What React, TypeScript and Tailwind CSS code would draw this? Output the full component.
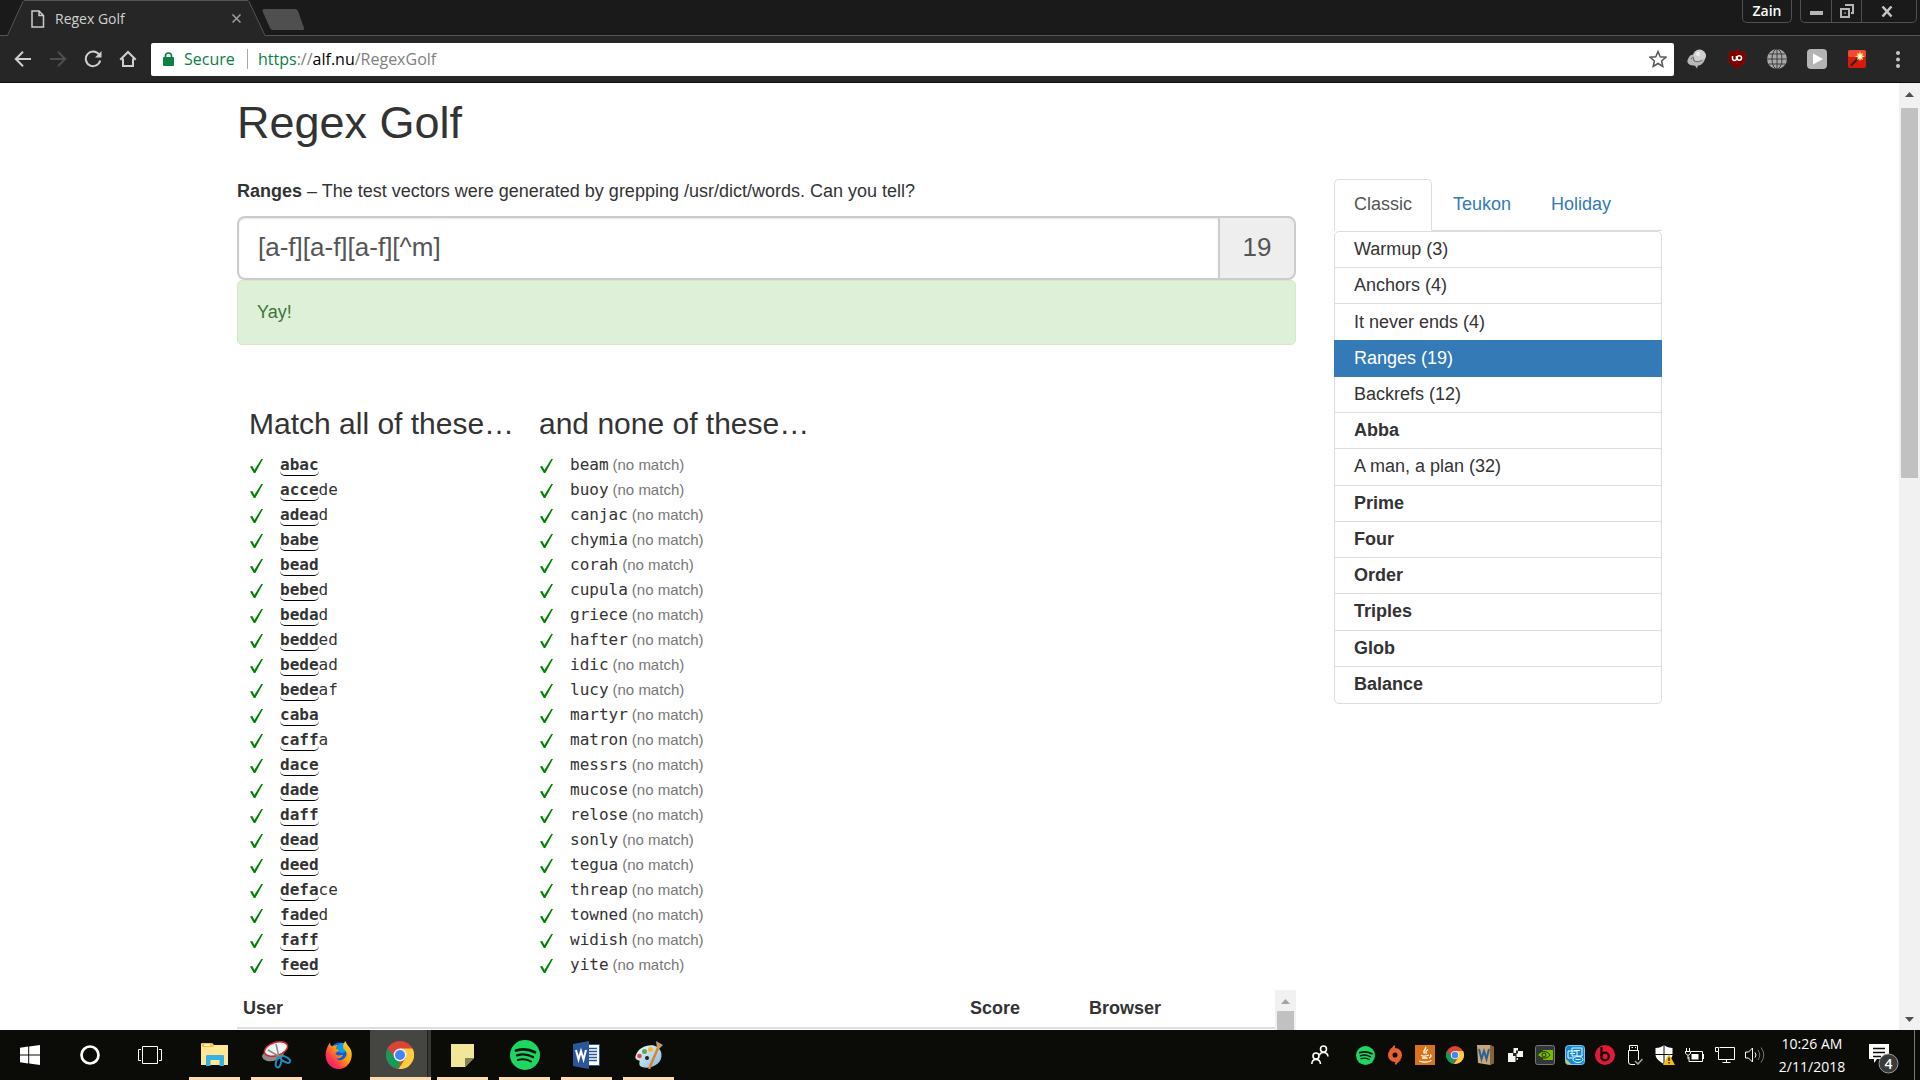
import React from "react";

const ui = "font-['Open_Sans','Noto_Sans',sans-serif]";

const matches: [string, string][] = [
  ["abac", ""], ["acce", "de"], ["adea", "d"], ["babe", ""], ["bead", ""], ["bebe", "d"], ["beda", "d"],
  ["bedd", "ed"], ["bede", "ad"], ["bede", "af"], ["caba", ""], ["caff", "a"], ["dace", ""], ["dade", ""],
  ["daff", ""], ["dead", ""], ["deed", ""], ["defa", "ce"], ["fade", "d"], ["faff", ""], ["feed", ""],
];

const nonMatches = [
  "beam", "buoy", "canjac", "chymia", "corah", "cupula", "griece", "hafter", "idic", "lucy", "martyr",
  "matron", "messrs", "mucose", "relose", "sonly", "tegua", "threap", "towned", "widish", "yite",
];

const levels = [
  { name: "Warmup (3)", solved: true }, { name: "Anchors (4)", solved: true },
  { name: "It never ends (4)", solved: true }, { name: "Ranges (19)", solved: true, active: true },
  { name: "Backrefs (12)", solved: true }, { name: "Abba" }, { name: "A man, a plan (32)", solved: true },
  { name: "Prime" }, { name: "Four" }, { name: "Order" }, { name: "Triples" }, { name: "Glob" }, { name: "Balance" },
];

function Spotify({ size }: { size: number }) {
  return (
    <svg width={size} height={size} viewBox="0 0 30 30" fill="none" stroke="#10130f" strokeLinecap="round">
      <circle cx="15" cy="15" r="15" fill="#1ed760" stroke="none" />
      <path d="M6 10.500c6-1.800 13.500-1.300 19 1.800" strokeWidth="2.800" />
      <path d="M7 15.300c5-1.500 11.300-.900 16 1.800" strokeWidth="2.300" />
      <path d="M7.800 20c4.300-1.200 9.200-.700 13.200 1.500" strokeWidth="1.900" />
    </svg>
  );
}

function ChromeLogo({ size }: { size: number }) {
  return (
    <svg width={size} height={size} viewBox="0 0 28 28">
      <circle cx="14" cy="14" r="14" fill="#db4437" />
      <path d="M1.900 7 8.400 17.300 14 20.500 12.500 27.900A14 14 0 0 1 1.900 7z" fill="#0f9d58" />
      <path d="M14 7.600H26.500A14 14 0 0 1 12.500 27.900L19.600 17.300z" fill="#ffcd40" />
      <circle cx="14" cy="14" r="6.400" fill="#f1f1f1" />
      <circle cx="14" cy="14" r="5" fill="#4285f4" />
    </svg>
  );
}

function TabStrip() {
  return (
    <div className={`flex h-9 items-start bg-[#1a1a1a] shadow-[inset_0_-1px_0_#555] ${ui}`}>
      <div className="relative ml-[7px] h-9 w-[259px]">
        <svg className="absolute inset-0" width="259" height="36" viewBox="0 0 259 36">
          <path d="M0 36 .5 35.500 16 1.500Q16.500.500 18 .500H240Q241.500.500 242 1.500L258 35.500 258 36z" fill="#262626" />
          <path d="M0 35.500H.5L16 1.500Q16.500.500 18 .500H240Q241.500.500 242 1.500L258 35.500H259" fill="none" stroke="#555" />
        </svg>
        <div className="relative flex h-[37px] items-center pl-6 pr-[21px]">
          <svg width="14" height="18" viewBox="0 0 14 18" fill="none" stroke="#ccc" strokeWidth="1.500">
            <path d="M1 1H8L12.500 5.500V17H1zM8 1V5.500H12.500" />
          </svg>
          <span className="ml-[10px] flex-1 text-[14px] text-[#d0d0d0]">Regex Golf</span>
          <button aria-label="Close tab" className="p-1">
            <svg width="9" height="9" viewBox="0 0 9 9" stroke="#a0a0a0" strokeWidth="1.500">
              <path d="M.5.500 8.500 8.500M8.500.500.500 8.500" />
            </svg>
          </button>
        </div>
      </div>
      <button aria-label="New tab" className="-ml-[5px] mt-[9px]">
        <svg width="44" height="21" viewBox="0 0 44 21">
          <path d="M3 0H34Q36 0 37 2L43 19Q43.500 21 41 21H12Q10 21 9 19L1.500 2Q1 0 3 0z" fill="#4f4f4f" />
        </svg>
      </button>
      <div className="flex-1" />
      <button className="h-[23px] w-[50px] rounded-b-[5px] border border-t-0 border-[#505050] text-[14px] leading-[22px] font-semibold text-white">
        Zain
      </button>
      <div className="mr-[3px] ml-2 flex h-[23px] rounded-b-[5px] border border-t-0 border-[#505050]">
        <button aria-label="Minimize" className="flex w-[31px] items-end justify-center border-r border-[#505050] pb-[7px]">
          <svg width="13" height="4"><rect width="13" height="4" y="0" fill="#b5b5b5" /></svg>
        </button>
        <button aria-label="Restore" className="flex w-[30px] items-center justify-center border-r border-[#505050]">
          <svg width="14" height="14" viewBox="0 0 14 14" fill="none" stroke="#b5b5b5" strokeWidth="2">
            <path d="M5 1H13V9H11M1 5H9V13H1zM4.500 9H5.500" />
          </svg>
        </button>
        <button aria-label="Close" className="flex w-[54px] items-center justify-center pr-1">
          <svg width="12" height="11" viewBox="0 0 12 11" stroke="#c4c4c4" strokeWidth="2.500">
            <path d="M1.500.500 10.500 10.500M10.500.500 1.500 10.500" />
          </svg>
        </button>
      </div>
    </div>
  );
}

function Toolbar() {
  return (
    <div className={`flex h-[47px] items-center border-b border-[#0c0c0c] bg-[#262626] pr-[14px] pl-[14px] ${ui}`}>
      <div className="flex w-[137px] shrink-0 gap-[17px]">
        <button aria-label="Back">
          <svg width="18" height="18" viewBox="0 0 18 18" fill="none" stroke="#cfcfcf" strokeWidth="2"><path d="M17 9H2.500M9 1.800 1.800 9 9 16.200" /></svg>
        </button>
        <button aria-label="Forward">
          <svg width="18" height="18" viewBox="0 0 18 18" fill="none" stroke="#4e4e4e" strokeWidth="2"><path d="M1 9H15.500M9 1.800 16.200 9 9 16.200" /></svg>
        </button>
        <button aria-label="Reload">
          <svg width="18" height="18" viewBox="0 0 18 18" fill="none" stroke="#cfcfcf" strokeWidth="2"><path d="M15 4.500A7.300 7.300 0 1 0 16.200 10.500" /><path d="M17.500 1V7.500H11z" fill="#cfcfcf" stroke="none" /></svg>
        </button>
        <button aria-label="Home">
          <svg width="18" height="18" viewBox="0 0 18 18" fill="none" stroke="#cfcfcf" strokeWidth="2"><path d="M1.200 9.800 9 2 16.800 9.800M4 8.500V16H14V8.500" /></svg>
        </button>
      </div>
      <div className="flex h-[33px] flex-1 items-center rounded-[2px] bg-white px-3 text-[16px]">
        <svg width="11" height="14" viewBox="0 0 11 14">
          <path d="M2.500 6V4a3 3 0 0 1 6 0V6" fill="none" stroke="#0b8043" strokeWidth="1.700" />
          <rect y="5" width="11" height="9" rx="1" fill="#0b8043" />
        </svg>
        <span className="ml-[10px] w-[63px] text-[#0b8043]">Secure</span>
        <span className="mr-[10px] h-5 w-px bg-[#aaa]" />
        <a href="#address" className="flex-1 text-[#808080]">
          <span className="text-[#0b8043]">https</span>://<span className="text-black">alf.nu</span>/RegexGolf
        </a>
        <button aria-label="Bookmark" className="-mr-[5px]">
          <svg width="18" height="18" viewBox="0 0 18 18" fill="none" stroke="#555" strokeWidth="1.500">
            <path d="M9 1.500 11.200 6.700 16.800 7.200 12.600 10.900 13.800 16.400 9 13.500 4.200 16.400 5.400 10.900 1.200 7.200 6.800 6.700z" />
          </svg>
        </button>
      </div>
      <div className="ml-[13px] flex gap-5">
        <button aria-label="Extension">
          <svg width="20" height="20" viewBox="0 0 20 20">
            <circle cx="12.500" cy="7" r="6.500" fill="#cfcfcf" />
            <path d="M1 10C4 3 8 6 7 9S9 14 18 9C17 15 13 16.500 11 16.500L10 19.500 8 16.800C2 16.500-1 14 1 10z" fill="#b8b8b8" />
            <path d="M4 10C6 7 7 8 6.500 10S9 14 15 11.500" fill="none" stroke="#6a6a6a" />
            <circle cx="11" cy="5" r="2" fill="#ededed" />
          </svg>
        </button>
        <button aria-label="Ad blocker">
          <svg width="20" height="20" viewBox="0 0 20 20" fill="none" stroke="#fff" strokeWidth="1.500">
            <path d="M10 .5C13 2.500 15.500 3 18.500 3V10C18.500 14.500 14 17.500 10 19.500 6 17.500 1.500 14.500 1.500 10V3C4.500 3 7 2.500 10 .500z" fill="#800000" stroke="#5a1a1a" strokeWidth="1" />
            <path d="M5.500 7V9.500a2 2 0 0 0 4 0V7" /><circle cx="12.300" cy="9" r="2.200" />
          </svg>
        </button>
        <button aria-label="Web extension">
          <svg width="20" height="20" viewBox="0 0 20 20" fill="none" stroke="#3e3e3e">
            <circle cx="10" cy="10" r="10" fill="#a8a8a8" stroke="none" />
            <path d="M10 0V20M0 10H20M2 5H18M2 15H18" /><ellipse cx="10" cy="10" rx="5" ry="10" />
          </svg>
        </button>
        <button aria-label="Player">
          <svg width="20" height="20" viewBox="0 0 20 20"><rect width="20" height="20" rx="4" fill="#b4b4b4" /><path d="M6 4.500V15.500L16 10z" fill="#fff" /></svg>
        </button>
        <button aria-label="Magic actions">
          <svg width="20" height="20" viewBox="0 0 20 20">
            <rect x="1" y="1" width="18" height="18" rx="2" fill="#d8190b" /><rect x="1" y="1" width="18" height="7" rx="2" fill="#ee4a34" />
            <path d="M4 16.500 12 8.500" stroke="#222" strokeWidth="2" />
            <path d="M13 2 13.800 5 16 4 15.200 6.500 18 7.500 15.200 8.500 16 11 13.800 10 13 12.500 12.200 10 10 11 10.800 8.500 8 7.500 10.800 6.500 10 4 12.200 5z" fill="#ffe27a" />
            <circle cx="13" cy="7.500" r="1.600" fill="#fff" />
          </svg>
        </button>
        <button aria-label="Menu" className="ml-[3px] flex w-4 justify-center">
          <svg width="4" height="20" viewBox="0 0 4 20" fill="#c8c8c8"><circle cx="2" cy="4" r="2" /><circle cx="2" cy="10.500" r="2" /><circle cx="2" cy="17" r="2" /></svg>
        </button>
      </div>
    </div>
  );
}

function Check() {
  return (
    <span className="w-[31px] shrink-0 self-center pl-px">
      <svg width="13" height="14" viewBox="0 0 13 14" role="img" aria-label="passed">
        <path d="M0 7.500 2.300 6.900 4.400 11 11.300 0H13L5.300 14H3.800z" fill="#008000" />
      </svg>
    </span>
  );
}

const mono = "font-['DejaVu_Sans_Mono',monospace] text-[16px]";
const row = "flex h-[25px] items-baseline pt-[2px] leading-[22px]";

function WordLists() {
  return (
    <div className="mt-[62px] flex pl-3">
      <section className="w-[290px]">
        <h3 className="text-[30px] leading-[33px] whitespace-nowrap">Match all of these…</h3>
        <ul className="mt-3">
          {matches.map(([hit, rest]) => (
            <li key={hit + rest} className={row}>
              <Check />
              <span className={mono}>
                <b className="inline-block h-[22px] rounded-b-[5px] border-b border-black">{hit}</b>{rest}
              </span>
            </li>
          ))}
        </ul>
      </section>
      <section>
        <h3 className="text-[30px] leading-[33px] whitespace-nowrap">and none of these…</h3>
        <ul className="mt-3">
          {nonMatches.map((word) => (
            <li key={word} className={row}>
              <Check />
              <span className={mono}>{word}</span>
              <span className="ml-1 text-[15px] text-[#777]">(no match)</span>
            </li>
          ))}
        </ul>
      </section>
    </div>
  );
}

function ScoreTable() {
  return (
    <div className="mt-[13px] flex h-[200px]">
      <div className="flex-1">
        <table className="w-full table-fixed text-left">
          <thead>
            <tr className="border-b-2 border-[#ddd]">
              <th className="p-[6px]">User</th>
              <th className="w-[119px] p-[6px]">Score</th>
              <th className="w-[192px] p-[6px]">Browser</th>
            </tr>
          </thead>
        </table>
      </div>
      <div aria-hidden className="flex w-[21px] flex-col items-center bg-[#f1f1f1]">
        <svg width="9" height="21" viewBox="0 0 9 21"><path d="M0 14 4.500 9 9 14z" fill="#a3a3a3" /></svg>
        <div className="w-[17px] flex-1 bg-[#c1c1c1]" />
      </div>
    </div>
  );
}

function Sidebar() {
  return (
    <aside>
      <nav className="flex border-b border-[#ddd]">
        <a href="#classic" className="-mb-px rounded-t-[5px] border border-b-white border-[#ddd] bg-white px-[19px] pt-3 pb-[13px] text-[#555]">Classic</a>
        <a href="#teukon" className="ml-px px-5 py-[13px] text-[#337ab7]">Teukon</a>
        <a href="#holiday" className="px-5 py-[13px] text-[#337ab7]">Holiday</a>
      </nav>
      <ul className="grid min-h-[473px] auto-rows-fr rounded-[5px] border border-[#ddd]">
        {levels.map((l) => (
          <li key={l.name} className="flex border-b border-[#ddd] last:border-b-0">
            <a
              href="#level"
              className={
                l.active
                  ? "-mx-px -my-px flex flex-1 items-center bg-[#337ab7] px-5 text-white"
                  : l.solved
                    ? "flex flex-1 items-center px-[19px]"
                    : "flex flex-1 items-center px-[19px] font-bold"
              }
            >
              {l.name}
            </a>
          </li>
        ))}
      </ul>
    </aside>
  );
}

function TaskButton({ label, children, open = true }: { label: string; children: React.ReactNode; open?: boolean }) {
  return (
    <button
      aria-label={label}
      className={
        open
          ? "flex w-[51px] items-center justify-center border-b-[3px] border-[#ffdcaf] pt-[3px]"
          : "flex w-[51px] items-center justify-center"
      }
    >
      {children}
    </button>
  );
}

function Tray({ label, children }: { label: string; children: React.ReactNode }) {
  return <button aria-label={label} className="flex w-[30px] items-center justify-center">{children}</button>;
}

function Taskbar() {
  return (
    <footer className={`flex h-[50px] shrink-0 bg-[#0b0b08] text-white ${ui}`}>
      <button aria-label="Start" className="flex w-[60px] items-center justify-center">
        <svg width="20" height="20" viewBox="0 0 20 20" fill="#fff"><path d="M0 2.800 8.200 1.600V9.500H0zM9.200 1.400 20 0V9.500H9.200zM0 10.500H8.200V18.400L0 17.200zM9.200 10.500H20V20L9.200 18.600z" /></svg>
      </button>
      <button aria-label="Cortana" className="flex w-[60px] items-center justify-center">
        <svg width="20" height="20" viewBox="0 0 20 20"><circle cx="10" cy="10" r="8.500" fill="none" stroke="#fff" strokeWidth="2.700" /></svg>
      </button>
      <button aria-label="Task view" className="flex w-[60px] items-center justify-center">
        <svg width="24" height="18" viewBox="0 0 24 18" fill="none" stroke="#fff"><path d="M4.500.500H19.500V17.500H4.500zM3 3.500H.500V14.500H3M21 3.500H23.500V14.500H21" /></svg>
      </button>
      <div className="ml-[9px] flex gap-[11px]">
        <TaskButton label="File Explorer">
          <svg width="28" height="24" viewBox="0 0 28 24">
            <path d="M0 1Q0 0 1 0H11L13 2H27V22H0z" fill="#ffe793" /><path d="M1 0H11L13 4H1z" fill="#f5c13d" /><path d="M3 1.500H9V3H3z" fill="#fff" />
            <path d="M5 23V13Q5 12 6 12H22Q23 12 23 13V23H18.500V17H9.500V23z" fill="#37b0e4" />
          </svg>
        </TaskButton>
        <TaskButton label="Snipping Tool">
          <svg width="30" height="28" viewBox="0 0 30 28" fill="none">
            <ellipse cx="11" cy="14" rx="11" ry="6" fill="#8b8b8b" transform="rotate(-12 11 14)" />
            <ellipse cx="14" cy="8" rx="12" ry="6.500" fill="#f4f4f4" stroke="#d2262c" strokeWidth="1.500" transform="rotate(-18 14 8)" />
            <path d="M6 9 18 16M14 3 17 16" stroke="#8a8a8a" strokeWidth="1.500" />
            <ellipse cx="16.500" cy="21.500" rx="2.500" ry="5" stroke="#2189bd" strokeWidth="2" transform="rotate(15 16.500 21.500)" />
            <ellipse cx="23.500" cy="18.500" rx="2.500" ry="5" stroke="#2189bd" strokeWidth="2" transform="rotate(-62 23.500 18.500)" />
          </svg>
        </TaskButton>
        <TaskButton label="Firefox" open={false}>
          <svg width="28" height="28" viewBox="0 0 28 28">
            <defs><linearGradient id="fx" x1="1" y1="0" x2="0" y2="1"><stop offset="0" stopColor="#ffe226" /><stop offset=".45" stopColor="#ff980e" /><stop offset=".7" stopColor="#ff3750" /><stop offset="1" stopColor="#e31587" /></linearGradient></defs>
            <circle cx="14.500" cy="11.500" r="10" fill="#0a5fd8" /><circle cx="17" cy="7" r="5" fill="#00a2f5" />
            <path d="M1 10C2 7 3 4 5 1.500 5 4 6 5 7.500 5.500 9 4.500 11 4 13 4 12 5 11 6 11.500 8L14 9C13 11 11 11.500 10.500 12 11 15 15 15 18 13.500 17 17 13 18 11 17.500 14 21 20 19 21.500 14 22 11 20 9 18.500 8 17.500 5 18.500 2 20.500 0 21 3 24 5 26 9 29 18 23 28 14 28 5 28-1 20 1 10z" fill="url(#fx)" />
          </svg>
        </TaskButton>
        <button aria-label="Chrome" className="-mx-[5px] flex w-[61px] border-b-[3px] border-[#ffdcaf] bg-[#454542]">
          <span className="flex w-[57px] items-center justify-center self-stretch pt-[3px] pl-[2px]"><ChromeLogo size={28} /></span>
          <span className="flex-1 self-stretch border-l border-[#222] bg-[#373735]" />
        </button>
        <TaskButton label="Sticky Notes">
          <svg width="23" height="23" viewBox="0 0 23 23"><path d="M0 0H23V14L14 23H0z" fill="#f2e699" /><path d="M14 14H23L14 23z" fill="#85805a" /></svg>
        </TaskButton>
        <TaskButton label="Spotify"><Spotify size={30} /></TaskButton>
        <TaskButton label="Word">
          <svg width="28" height="28" viewBox="0 0 28 28">
            <rect x="14" y="3.500" width="12.500" height="21" fill="#fff" stroke="#2b579a" />
            <path d="M16 7.500H24M16 10.500H24M16 13.500H24M16 16.500H24M16 19.500H24" stroke="#2b579a" strokeWidth="1.500" />
            <path d="M0 3 16 0V28L0 25z" fill="#2b579a" />
            <path d="M3 9 5.500 18.500 8 10 10.500 18.500 13 9" fill="none" stroke="#fff" strokeWidth="2" />
          </svg>
        </TaskButton>
        <TaskButton label="Paint">
          <svg width="30" height="28" viewBox="0 0 30 28">
            <defs><linearGradient id="pal" x1="0" y1="0" x2="1" y2="1"><stop offset="0" stopColor="#f4fbff" /><stop offset="1" stopColor="#82b8da" /></linearGradient></defs>
            <path d="M2 14C4 7 13 3 20 4.500 28 7 29 15 26 20 22 26 13 28 8 26 3 24 7 20 5 19.500 2 19 .500 17 2 14z" fill="url(#pal)" />
            <circle cx="5.500" cy="15" r="2.300" fill="#e04545" /><circle cx="10.500" cy="10.500" r="2.500" fill="#54ae49" /><circle cx="16.500" cy="8.500" r="2.500" fill="#f9b531" /><circle cx="13" cy="17" r="2" fill="#16222c" />
            <path d="M24 7 15.500 27" stroke="#df812b" strokeWidth="2.500" strokeLinecap="round" />
            <path d="M22 0 29 4 25 8 23 7z" fill="#c49a6b" />
          </svg>
        </TaskButton>
      </div>
      <div className="flex-1" />
      <Tray label="People">
        <svg width="18" height="20" viewBox="0 0 18 20" fill="none" stroke="#fff" strokeWidth="1.600"><circle cx="12.500" cy="4" r="3" /><circle cx="5" cy="11" r="3" /><path d="M8.500 10.500C9 6.500 16.500 6 17 11.500M.800 19C1 13 9 13 9.500 19" /></svg>
      </Tray>
      <div className="ml-[15px] flex">
        <Tray label="Spotify"><Spotify size={19} /></Tray>
        <Tray label="Origin">
          <svg width="16" height="20" viewBox="0 0 16 20"><circle cx="8" cy="10" r="4.800" fill="none" stroke="#e8622d" strokeWidth="4.500" /><path d="M2 5C4 3 6 2.500 7 0 9 1 8 3 7 4zM14 15C12 17 10 17.500 9 20 7 19 8 17 9 16z" fill="#e8622d" /></svg>
        </Tray>
        <Tray label="Java">
          <svg width="20" height="20" viewBox="0 0 20 20" fill="none" stroke="#fff" strokeWidth="1.300"><rect width="20" height="20" fill="#d9731a" stroke="none" /><path d="M10.500 2C12 4 7 5 9.500 8.500M13 4.500C9.500 6 11.500 7 11 9M6 10.500C9 11.500 12 11 14 10M7 13H12.500M4 16C8 17.500 13 17.500 16.500 15.500M15 10C17 10 16 12.500 14 13" /></svg>
        </Tray>
        <Tray label="Chrome"><ChromeLogo size={18} /></Tray>
        <Tray label="Dictionary">
          <svg width="17" height="20" viewBox="0 0 17 20"><path d="M0 0H13L17 2V18L13 20 1 18z" fill="#c8a57a" /><path d="M13 0 17 2V18L13 20z" fill="#8a6038" /><path d="M2 4 4.500 14 7 6 9.500 14 12 4" fill="none" stroke="#286296" strokeWidth="2" /></svg>
        </Tray>
        <Tray label="Displays">
          <svg width="15" height="14" viewBox="0 0 15 14"><path d="M5.500 0H10V5H5.500zM8.500 3H15V9H8.500z" fill="#f3f3f3" /><path d="M8 2.500H10V5.500H8zM5 5H8V8H5z" fill="#222" /><path d="M0 5H5V8H7.500V14H0z" fill="#f3f3f3" /><path d="M8.500 10H10V12H8.500z" fill="#ccc" /></svg>
        </Tray>
        <Tray label="Graphics settings">
          <svg width="20" height="20" viewBox="0 0 20 20"><rect x=".5" y=".500" width="19" height="19" rx="2" fill="#34373a" stroke="#74777a" /><path d="M8 5H18V15H8z" fill="#76b900" /><path d="M2.500 10C5 5.500 12 5 15 10 12 14.500 6 14 2.500 10z" fill="#76b900" stroke="#20350b" /><circle cx="9" cy="10" r="2" fill="none" stroke="#20350b" /></svg>
        </Tray>
        <Tray label="Graphics control">
          <svg width="20" height="20" viewBox="0 0 20 20" fill="none" stroke="#e8f7ff"><rect x=".5" y=".500" width="19" height="19" rx="3" fill="#1489d0" stroke="#81c7ea" /><path d="M1 14 6 19H3Q1 19 1 17z" fill="#d6c94a" stroke="none" /><path d="M7 3H17V11H7zM3 6H12V13H3zM5 8.500H10M9 5.500H15" /><ellipse cx="13" cy="14.500" rx="5" ry="3" fill="#1489d0" /><path d="M10.500 14.500H15.500" /></svg>
        </Tray>
        <Tray label="Beats">
          <svg width="20" height="20" viewBox="0 0 20 20"><circle cx="10" cy="10" r="10" fill="#e51937" /><path d="M6.500 2V12" stroke="#0b0b08" strokeWidth="2.300" /><circle cx="10" cy="11.500" r="3.800" fill="none" stroke="#0b0b08" strokeWidth="2.300" /></svg>
        </Tray>
        <Tray label="Safely remove hardware">
          <svg width="16" height="20" viewBox="0 0 16 20" fill="none" stroke="#fff"><path d="M2.500 5.500V.500H10.500V5.500M1.500 5.500H11.500V15M1.500 5.500V17Q1.500 19.500 4 19.500H8M4.500 2.500H6M8 2.500H9" /><path d="M8 16 11 19 15.500 14" stroke="#aaa" strokeWidth="1.500" /></svg>
        </Tray>
        <Tray label="Security">
          <svg width="20" height="20" viewBox="0 0 20 20"><path d="M9 0C11 2 15 3 17.500 3V10C17 14 13 17 9 19 5 17 1 14 .500 10V3C4 3 7 2 9 0z" fill="#fff" /><path d="M9 0V19M0 9.500H18" stroke="#0b0b08" /><path d="M14 9 20 20H8z" fill="#fdb813" /><path d="M14 12.500V16M14 17V18.500" stroke="#222" strokeWidth="1.500" /></svg>
        </Tray>
        <Tray label="Battery">
          <svg width="20" height="15" viewBox="0 0 20 15" fill="none" stroke="#fff"><path d="M4 9V13.500H17.500V3.500H6M18.500 6V11M1.500 0V3M4.500 0V3M.500 3.500H5.500V5.500L3 7.500.500 5.500zM3 7.500V11" /><rect x="6.500" y="6" width="7" height="5.500" fill="#fff" stroke="none" /></svg>
        </Tray>
        <Tray label="Network">
          <svg width="20" height="16" viewBox="0 0 20 16" fill="none" stroke="#fff"><path d="M4.500.500H19.500V12.500H3.500V5M.500.500H3.500V4.500H.500zM11.500 12.500V15.500M7.500 15.500H15.500" /></svg>
        </Tray>
        <Tray label="Volume">
          <svg width="20" height="18" viewBox="0 0 20 18" fill="none" stroke="#fff"><path d="M.500 6H3.500L7.500 2V16L3.500 12H.500z" /><path d="M10 6.500Q12 9 10 11.500" /><path d="M13 4Q16.500 9 13 14M16 1.500Q21.500 9 16 16.500" stroke="#777" /></svg>
        </Tray>
      </div>
      <div className="w-[84px] text-center text-[14px] leading-[23px]">
        <div className="pt-[2px]">10:26 AM</div>
        <div>2/11/2018</div>
      </div>
      <button aria-label="Notifications" className="ml-[13px] flex w-[47px] items-center pt-[6px]">
        <svg width="32" height="32" viewBox="0 0 32 32">
          <path d="M2 2H22V17H10L7 21V17H2z" fill="#fff" /><path d="M6 6.500H18M6 10.500H18M6 14.500H14" stroke="#0b0b08" strokeWidth="1.500" />
          <circle cx="21.500" cy="21.500" r="9.500" fill="#3a3a3a" stroke="#999" />
          <text x="21.500" y="26.500" fontSize="14" fontWeight="600" textAnchor="middle" fill="#fff">4</text>
        </svg>
      </button>
      <button aria-label="Show desktop" className="w-[6px] border-l border-[#777]" />
    </footer>
  );
}

export default function App() {
  return (
    <div className="flex h-screen flex-col overflow-hidden bg-white">
      <header className="shrink-0">
        <TabStrip />
        <Toolbar />
      </header>
      <div className="flex min-h-0 flex-1">
        <main className="flex-1 overflow-hidden font-['Liberation_Sans',Arial,sans-serif] text-[18px] leading-[25px] text-[#333]">
          <div className="mx-auto max-w-[1463px] px-[19px] pt-[15px]">
            <h1 className="mb-[31px] text-[45px] leading-[50px]">Regex Golf</h1>
            <div className="grid grid-cols-[minmax(0,1fr)_328px] items-start gap-[38px]">
              <div>
                <p className="mb-3"><b>Ranges</b> – The test vectors were generated by grepping /usr/dict/words. Can you tell?</p>
                <div className="flex h-16 text-[26px] text-[#555]">
                  <input
                    aria-label="Regular expression"
                    defaultValue="[a-f][a-f][a-f][^m]"
                    className="min-w-0 flex-1 rounded-l-[8px] border-2 border-r-0 border-[#ccc] px-[19px] pb-[2px] shadow-[inset_0_1px_2px_rgba(0,0,0,0.1)] outline-none"
                  />
                  <output className="flex w-[78px] items-center justify-center rounded-r-[8px] border-2 border-[#ccc] bg-[#eee] pb-[2px]">19</output>
                </div>
                <p className="rounded-[5px] border border-[#d6e9c6] bg-[#dff0d8] p-[19px] text-[#3c763d]">Yay!</p>
                <WordLists />
                <ScoreTable />
              </div>
              <Sidebar />
            </div>
          </div>
        </main>
        <div aria-hidden className="flex w-[21px] flex-col items-center bg-[#f1f1f1]">
          <svg width="9" height="25" viewBox="0 0 9 25"><path d="M0 14 4.500 9 9 14z" fill="#505050" /></svg>
          <div className="h-[370px] w-[17px] bg-[#c1c1c1]" />
          <div className="flex-1" />
          <svg width="9" height="21" viewBox="0 0 9 21"><path d="M0 8 4.500 13 9 8z" fill="#505050" /></svg>
        </div>
      </div>
      <Taskbar />
    </div>
  );
}
